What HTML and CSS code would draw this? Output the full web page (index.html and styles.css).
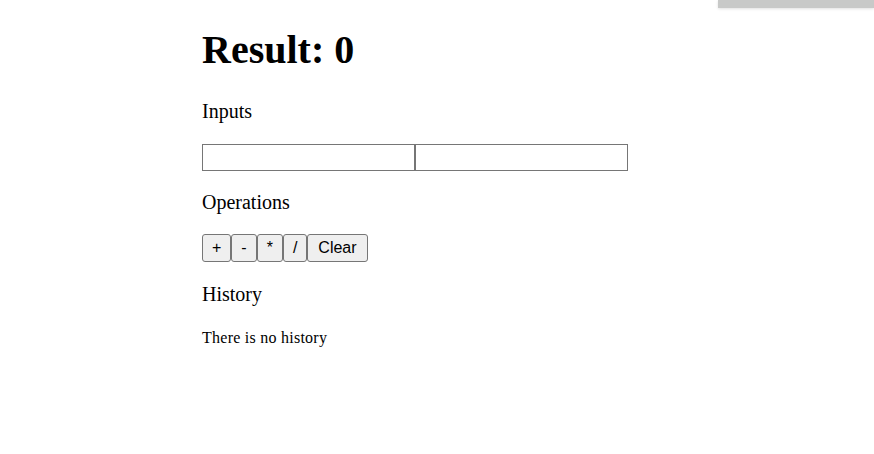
FILE: index.html
```html
<!DOCTYPE html>
<html>
<head>
<meta charset="utf-8">
<link rel="stylesheet" href="styles.css">
</head>
<body>
<div class="topbar"></div>
<main class="calc">
  <h1 class="result">Result: 0</h1>
  <p class="label label-inputs">Inputs</p>
  <div class="inputs"><input class="field" type="text"><input class="field" type="text"></div>
  <p class="label label-ops">Operations</p>
  <div class="ops"><button class="btn">+</button><button class="btn">-</button><button class="btn">*</button><button class="btn">/</button><button class="btn btn-clear">Clear</button></div>
  <p class="label label-history">History</p>
  <p class="empty">There is no history</p>
</main>
</body>
</html>
```

FILE: styles.css
```css
html, body {
  margin: 0;
  padding: 0;
  background: #ffffff;
}
body {
  font-family: "Liberation Serif", "Times New Roman", serif;
  color: #000;
}
.topbar {
  position: fixed;
  top: 0;
  right: 0;
  width: 156px;
  height: 8px;
  background: #c8c9c8;
  box-shadow: 0 1px 3px rgba(0,0,0,0.12);
}
.calc {
  padding: 27px 0 0 202px;
}
.result {
  margin: 0;
  font-size: 40px;
  font-weight: bold;
  line-height: 46px;
}
.label {
  margin: 0;
  font-size: 20px;
  line-height: 23px;
}
.label-inputs { margin-top: 27px; }
.label-ops { margin-top: 20px; }
.label-history { margin-top: 21px; }
.inputs {
  display: flex;
  margin-top: 21px;
}
.field {
  box-sizing: border-box;
  width: 213px;
  height: 27px;
  margin: 0;
  border: 1px solid #767676;
  border-radius: 0;
  padding: 1px 2px;
  font-family: "Liberation Sans", Arial, sans-serif;
  font-size: 13.33px;
  background: #fff;
}
.ops {
  display: flex;
  margin-top: 20px;
}
.btn {
  box-sizing: border-box;
  height: 28px;
  margin: 0;
  padding: 0 9px;
  border: 1px solid #767676;
  border-radius: 3px;
  background: #efefef;
  font-family: "Liberation Sans", Arial, sans-serif;
  font-size: 16px;
  color: #000;
}
.btn-clear {
  padding: 0 10px;
}
.empty {
  margin: 23px 0 0;
  font-size: 16px;
  line-height: 18px;
  letter-spacing: 0.25px;
}
```
